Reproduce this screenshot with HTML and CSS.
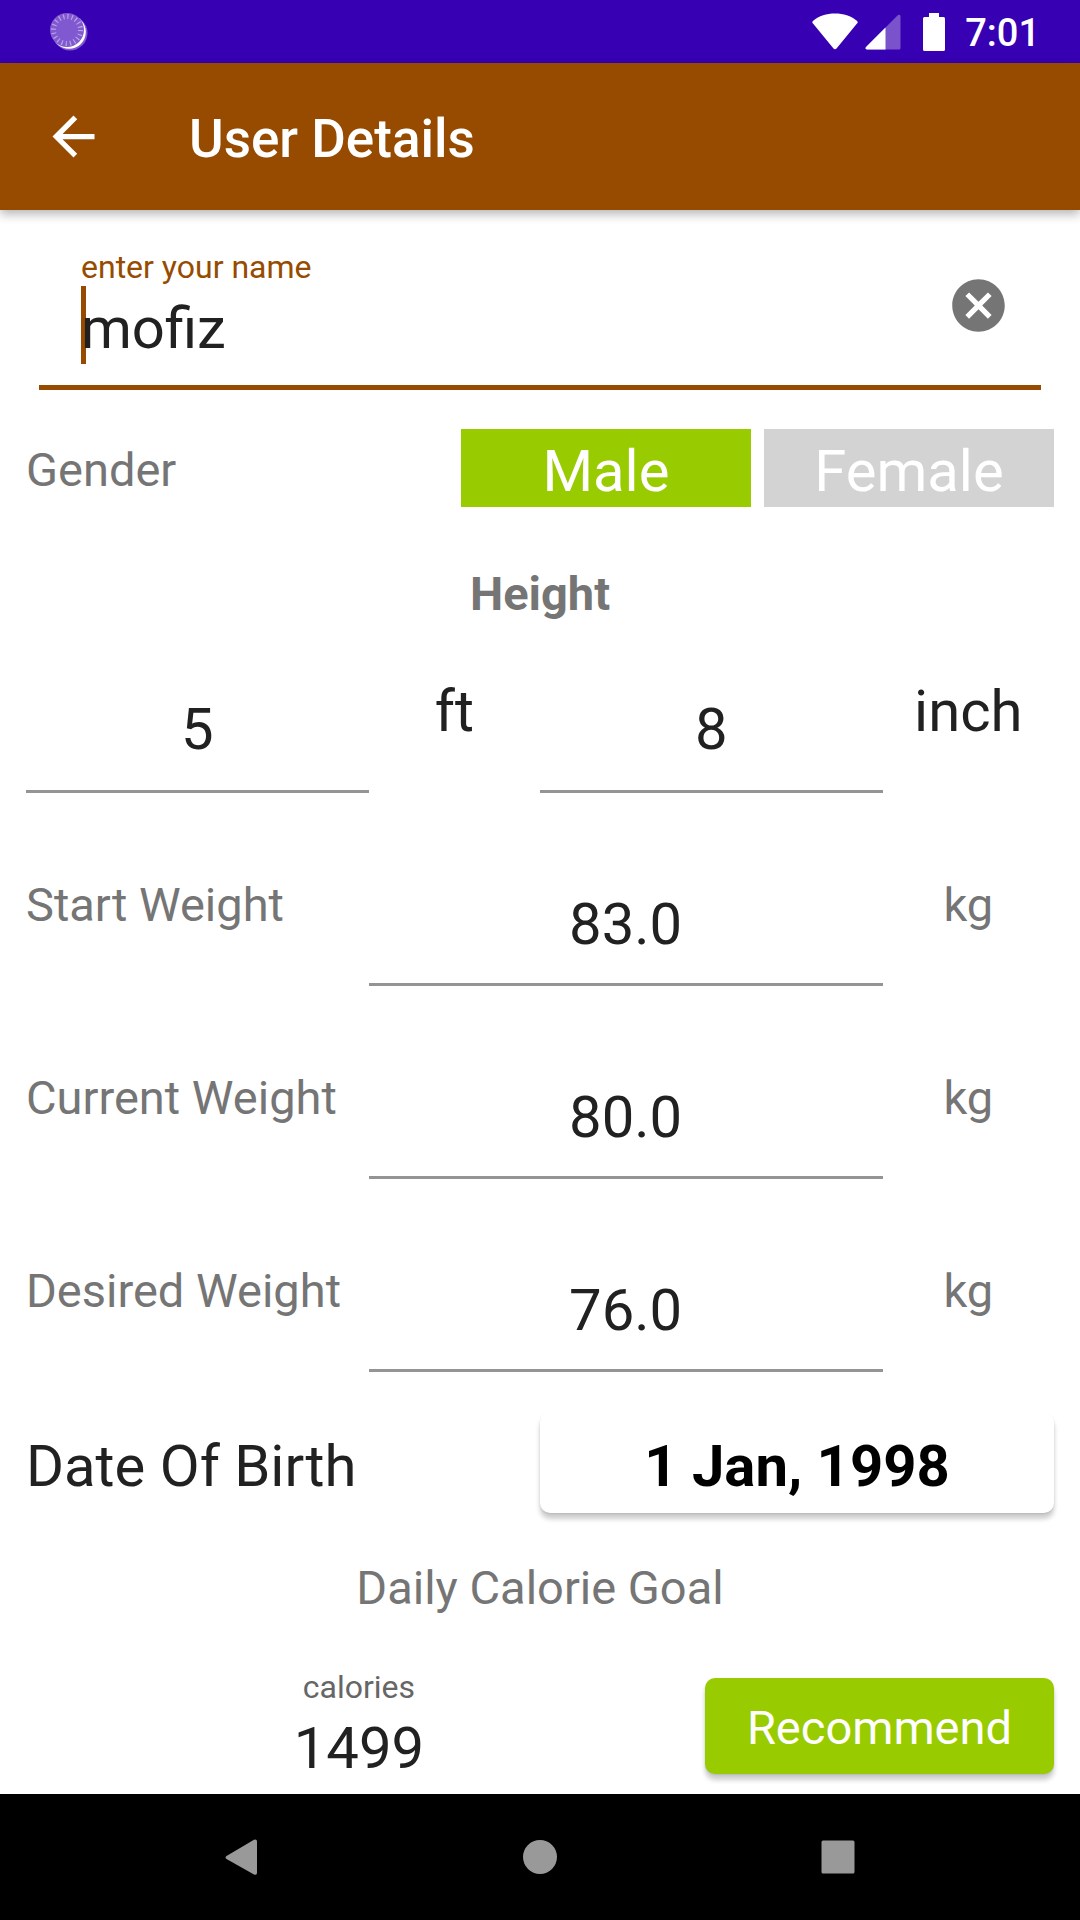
FILE: index.html
```html
<!DOCTYPE html>
<html lang="en">
<head>
<meta charset="utf-8">
<meta name="viewport" content="width=device-width, initial-scale=1">
<title>User Details</title>
<link rel="stylesheet" href="styles.css">
</head>
<body class="screen">
  <div class="status-bar">
    <svg class="status-spinner" width="38" height="40" viewBox="0 0 38 40" aria-hidden="true">
      <circle cx="20" cy="21" r="17.500" fill="#8058cf"/>
      <circle cx="19" cy="20" r="16.800" fill="#fff"/>
      <circle cx="17" cy="18" r="17" fill="#8058cf"/>
      <circle cx="17" cy="18" r="13.500" fill="none" stroke="#b9a3e6" stroke-width="5" stroke-dasharray="1.200 3.041"/>
    </svg>
    <div class="status-icons">
      <svg class="wifi" width="46" height="37" viewBox="0 0 46 37" aria-hidden="true">
        <path fill="#fff" d="M1 10.500Q-.5 9 1.200 7.700C7 3 14.500.5 23 .5S39 3 44.800 7.700Q46.500 9 45 10.500L24.500 35.500Q23 37 21.500 35.500Z"/>
      </svg>
      <svg class="signal" width="36" height="36" viewBox="0 0 36 36" aria-hidden="true">
        <path fill="#7a52cc" d="M1 33 33 1Q35.500 0 35.500 2.500V34Q35.500 35.500 34 35.500H2Q-.5 35 1 33Z"/>
        <path fill="#fff" d="M20.500 13.500V35.500H2Q-.5 35 1 33Z"/>
      </svg>
      <svg class="battery" width="22" height="38" viewBox="0 0 22 38" aria-hidden="true">
        <path fill="#fff" d="M6 0H16V4H20.500Q22 4 22 5.500V36.500Q22 38 20.500 38H1.500Q0 38 0 36.500V5.500Q0 4 1.500 4H6Z"/>
      </svg>
      <span class="clock">7:01</span>
    </div>
  </div>

  <header class="app-bar">
    <button class="icon-button" type="button" aria-label="Back">
      <svg width="63" height="63" viewBox="0 0 24 24"><path fill="#fff" d="M20 11H7.830l5.590-5.590L12 4l-8 8 8 8 1.410-1.410L7.830 13H20v-2z"/></svg>
    </button>
    <h1 class="app-title">User Details</h1>
  </header>

  <main class="form">
    <div class="name-field">
      <div class="field-text">
        <label class="caption caption-active" for="name">enter your name</label>
        <div class="caret-wrap">
          <span class="caret"></span>
          <input class="input" id="name" type="text" value="mofiz">
        </div>
      </div>
      <button class="icon-button" type="button" aria-label="Clear name">
        <svg width="63" height="63" viewBox="0 0 24 24"><path fill="#757575" d="M12 2C6.470 2 2 6.470 2 12s4.470 10 10 10 10-4.470 10-10S17.530 2 12 2zm5 13.590L15.590 17 12 13.410 8.410 17 7 15.590 10.590 12 7 8.410 8.410 7 12 10.590 15.590 7 17 8.410 13.410 12 17 15.590z"/></svg>
      </button>
    </div>

    <div class="row gender-row">
      <span class="label">Gender</span>
      <button class="toggle toggle-on" type="button" aria-pressed="true">Male</button>
      <button class="toggle" type="button" aria-pressed="false">Female</button>
    </div>

    <h2 class="section-title section-bold">Height</h2>

    <div class="row height-row">
      <input class="input boxed" id="feet" type="text" inputmode="numeric" value="5">
      <label class="unit unit-large" for="feet">ft</label>
      <input class="input boxed" id="inches" type="text" inputmode="numeric" value="8">
      <label class="unit unit-large" for="inches">inch</label>
    </div>

    <div class="row weight-row">
      <label class="unit unit-name" for="start">Start Weight</label>
      <input class="input boxed" id="start" type="text" inputmode="decimal" value="83.0">
      <span class="unit">kg</span>
    </div>
    <div class="row weight-row">
      <label class="unit unit-name" for="current">Current Weight</label>
      <input class="input boxed" id="current" type="text" inputmode="decimal" value="80.0">
      <span class="unit">kg</span>
    </div>
    <div class="row weight-row">
      <label class="unit unit-name" for="desired">Desired Weight</label>
      <input class="input boxed" id="desired" type="text" inputmode="decimal" value="76.0">
      <span class="unit">kg</span>
    </div>

    <div class="row birth-row">
      <span class="birth-label">Date Of Birth</span>
      <button class="date-button" type="button">1 Jan, 1998</button>
    </div>

    <h2 class="section-title">Daily Calorie Goal</h2>

    <div class="row calorie-row">
      <div class="calorie-field">
        <label class="caption" for="calories">calories</label>
        <input class="input centered" id="calories" type="text" inputmode="numeric" value="1499">
      </div>
      <button class="recommend" type="button">Recommend</button>
    </div>
  </main>

  <nav class="nav-bar" aria-label="System">
    <button class="icon-button" type="button" aria-label="Back">
      <svg width="36" height="36" viewBox="0 0 36 36"><path fill="#999" d="M2.500 20Q.500 18.500 2.500 17L30 .800Q33 0 33 2.500V34Q33 36.500 30 35.500Z"/></svg>
    </button>
    <button class="icon-button" type="button" aria-label="Home">
      <svg width="36" height="36" viewBox="0 0 36 36"><circle cx="18" cy="18" r="17" fill="#999"/></svg>
    </button>
    <button class="icon-button" type="button" aria-label="Recent apps">
      <svg width="36" height="36" viewBox="0 0 36 36"><rect x="1.500" y="1.500" width="33" height="33" rx="1.500" fill="#999"/></svg>
    </button>
  </nav>
</body>
</html>
```

FILE: styles.css
```css
:root {
  --purple: #3700b3;
  --brown: #964b00;
  --green: #99cc00;
  --ink: #212121;
  --muted: #757575;
}

*,
*::before,
*::after {
  box-sizing: border-box;
}

.screen {
  margin: 0;
  min-height: 100vh;
  display: flex;
  flex-direction: column;
  background: #fff;
  color: var(--ink);
  font-family: Roboto, "Liberation Sans", sans-serif;
}

button,
input {
  font: inherit;
  color: inherit;
  border: 0;
  border-radius: 0;
  margin: 0;
  padding: 0;
  background: none;
  outline: none;
}

svg {
  display: block;
}

.icon-button {
  display: flex;
  justify-content: center;
  align-items: center;
}

/* System status bar */
.status-bar {
  display: flex;
  justify-content: space-between;
  align-items: center;
  height: 63px;
  padding: 0 40px 0 50px;
  background: var(--purple);
}

.status-icons {
  display: flex;
  align-items: center;
  color: #fff;
}

.signal {
  margin-left: 7px;
}

.battery {
  margin-left: 22px;
}

.clock {
  margin-left: 20px;
  padding-top: 3px;
  font-size: 38px;
  line-height: 44px;
  font-weight: 500;
}

/* App bar */
.app-bar {
  position: relative;
  display: flex;
  align-items: center;
  gap: 84px;
  height: 147px;
  padding: 0 42px;
  background: var(--brown);
  color: #fff;
  box-shadow: 0 4px 10px rgba(0, 0, 0, 0.3);
}

.app-title {
  margin: 0;
  padding-top: 4px;
  font-size: 53px;
  line-height: 62px;
  font-weight: 500;
}

/* Form */
.form {
  flex: 1;
}

.input {
  display: block;
  width: 100%;
  min-width: 0;
  height: 68px;
  font-size: 58px;
  line-height: 68px;
}

.caption {
  display: block;
  margin-bottom: 8px;
  color: #666;
  font-size: 32px;
  line-height: 38px;
}

.caption-active {
  color: var(--brown);
}

.name-field {
  display: flex;
  align-items: center;
  margin: 0 39px;
  padding: 38px 31px 23px 42px;
  border-bottom: 5px solid var(--brown);
}

.field-text {
  flex: 1;
}

.caret-wrap {
  position: relative;
}

.caret {
  position: absolute;
  left: 0;
  top: -8px;
  width: 5px;
  height: 78px;
  background: var(--brown);
}

.caret-wrap .input {
  position: relative;
}

.row {
  display: grid;
  margin: 0 26px;
}

.gender-row {
  grid-template-columns: 16fr 11fr 11fr;
  gap: 13px;
  margin-top: 39px;
  align-items: center;
}

.label {
  padding-top: 4px;
  color: var(--muted);
  font-size: 47px;
  line-height: 56px;
}

.toggle {
  height: 78px;
  padding-top: 6px;
  background: #d3d3d3;
  color: #fff;
  font-size: 58px;
  line-height: 68px;
}

.toggle-on {
  background: var(--green);
}

.section-title {
  margin: 47px 26px 0;
  color: var(--muted);
  font-size: 47px;
  line-height: 56px;
  font-weight: 400;
  text-align: center;
}

.section-bold {
  margin-top: 59px;
  font-weight: 700;
}

.height-row {
  grid-template-columns: 2fr 1fr 2fr 1fr;
  margin-top: 24px;
}

.weight-row {
  grid-template-columns: 2fr 3fr 1fr;
  margin-top: 46px;
}

.boxed {
  height: 147px;
  padding: 49px 0 27px;
  border-bottom: 3px solid #949494;
  text-align: center;
}

.weight-row .boxed {
  padding: 51px 0 25px;
}

.unit {
  display: flex;
  justify-content: center;
  align-items: center;
  padding-bottom: 16px;
  color: var(--muted);
  font-size: 47px;
  line-height: 56px;
  white-space: nowrap;
}

.unit-name {
  justify-content: flex-start;
}

.unit-large {
  padding-bottom: 18px;
  color: var(--ink);
  font-size: 58px;
  line-height: 68px;
}

.birth-row {
  grid-template-columns: 1fr 1fr;
  align-items: center;
  margin-top: 40px;
}

.birth-label {
  padding-top: 6px;
  font-size: 58px;
  line-height: 68px;
}

.date-button {
  height: 101px;
  padding-top: 6px;
  border-radius: 10px;
  background: #fff;
  color: #000;
  font-size: 58px;
  line-height: 68px;
  font-weight: 700;
  box-shadow: 0 6px 5px rgba(0, 0, 0, 0.2), 0 1px 2px rgba(0, 0, 0, 0.1);
}

.calorie-row {
  grid-template-columns: 1fr auto;
  gap: 13px;
  margin-top: 14px;
}

.calorie-field {
  padding: 38px 0 12px;
  text-align: center;
}

.centered {
  text-align: center;
}

.recommend {
  align-self: end;
  height: 96px;
  margin-bottom: 20px;
  padding: 4px 42px 0;
  border-radius: 10px;
  background: var(--green);
  color: #fff;
  font-size: 47px;
  line-height: 56px;
  box-shadow: 0 6px 5px rgba(0, 0, 0, 0.2), 0 1px 2px rgba(0, 0, 0, 0.1);
}

/* System navigation bar */
.nav-bar {
  display: grid;
  grid-template-columns: repeat(3, 1fr);
  height: 126px;
  padding: 0 93px;
  background: #000;
}
```
